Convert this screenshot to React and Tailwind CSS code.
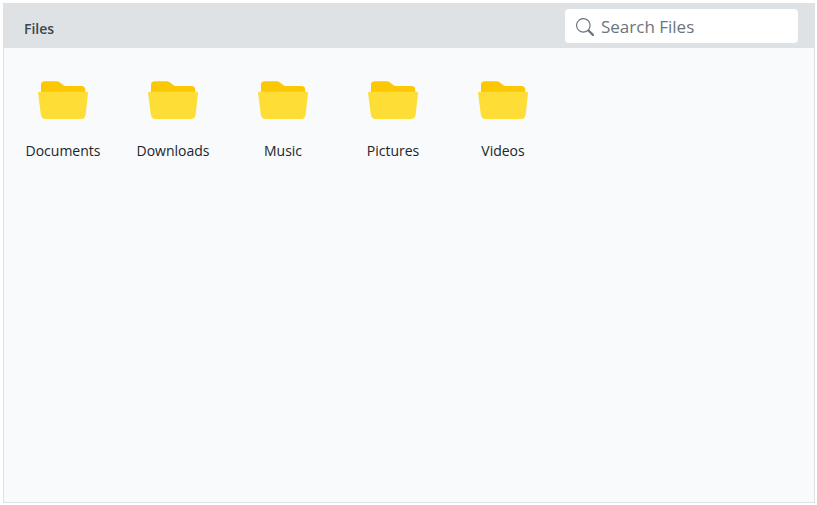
import { useState } from "react";

const folders = ["Documents", "Downloads", "Music", "Pictures", "Videos"];

const FolderIcon = () => (
  <svg viewBox="0 0 50 38" className="w-[50px] h-[38px]" aria-hidden="true">
    <path
      d="M3 14V4C3 1.600 4.300.3 6.800.3h11.400c1.500 0 2.600.3 3.800 1.200L25.200 4c1 .8 1.800 1.100 3 1.100H43.500C45.800 5.100 47.200 6.500 47.200 8.500V14z"
      fill="#fcc803"
    />
    <path
      d="M1.500 10.700h47c1 0 1.600.7 1.500 1.600l-2.300 21C47.400 36.200 45.800 38 43 38H7.500C4.700 38 3.100 36.200 2.800 33.300L.1 12.300C0 11.400.5 10.700 1.500 10.700z"
      fill="#fede36"
    />
  </svg>
);

const SearchIcon = () => (
  <svg
    viewBox="0 0 16 16"
    fill="currentColor"
    className="w-[18px] h-[18px] shrink-0"
    aria-hidden="true"
  >
    <path d="M11.742 10.344a6.500 6.500 0 1 0-1.397 1.398h-.001c.03.040.062.078.098.115l3.850 3.850a1 1 0 0 0 1.415-1.414l-3.850-3.850a1.007 1.007 0 0 0-.115-.1zM12 6.500a5.500 5.500 0 1 1-11 0 5.500 5.500 0 0 1 11 0z" />
  </svg>
);

const App = () => {
  const [query, setQuery] = useState("");

  const visible = folders.filter((name) =>
    name.toLowerCase().includes(query.trim().toLowerCase())
  );

  return (
    <div className="min-h-screen flex bg-white pt-[3px] pl-[3px] pr-[2px] pb-[2px] font-['Open_Sans',sans-serif]">
      <main className="flex-1 flex flex-col border border-t-0 border-[#dee2e4] bg-[#f8fafc]">
        {/* Title bar */}
        <header className="flex items-center justify-between bg-[#dee2e4] pl-5 pr-4 pt-1.5 pb-[5px]">
          <h1 className="text-sm leading-5 font-semibold text-[#40464b] pt-1.5">Files</h1>

          <label className="flex items-center w-[233px] h-[34px] gap-[7px] pl-[11px] pr-3 pt-0.5 rounded bg-white text-[#6c757d]">
            <SearchIcon />
            <input
              type="text"
              value={query}
              onChange={(e) => setQuery(e.target.value)}
              placeholder="Search Files"
              aria-label="Search Files"
              className="w-full min-w-0 bg-transparent text-[17px] leading-6 text-[#212529] placeholder:text-[#6c757d] outline-none"
            />
          </label>
        </header>

        {/* Folder grid */}
        <div className="flex flex-wrap px-1 pt-[33px]">
          {visible.map((name) => (
            <button
              key={name}
              type="button"
              className="w-[110px] flex flex-col items-center gap-[22px] pb-8 text-sm leading-5 text-[#212529] cursor-pointer"
            >
              <FolderIcon />
              <span>{name}</span>
            </button>
          ))}
        </div>
      </main>
    </div>
  );
};

export default App;
